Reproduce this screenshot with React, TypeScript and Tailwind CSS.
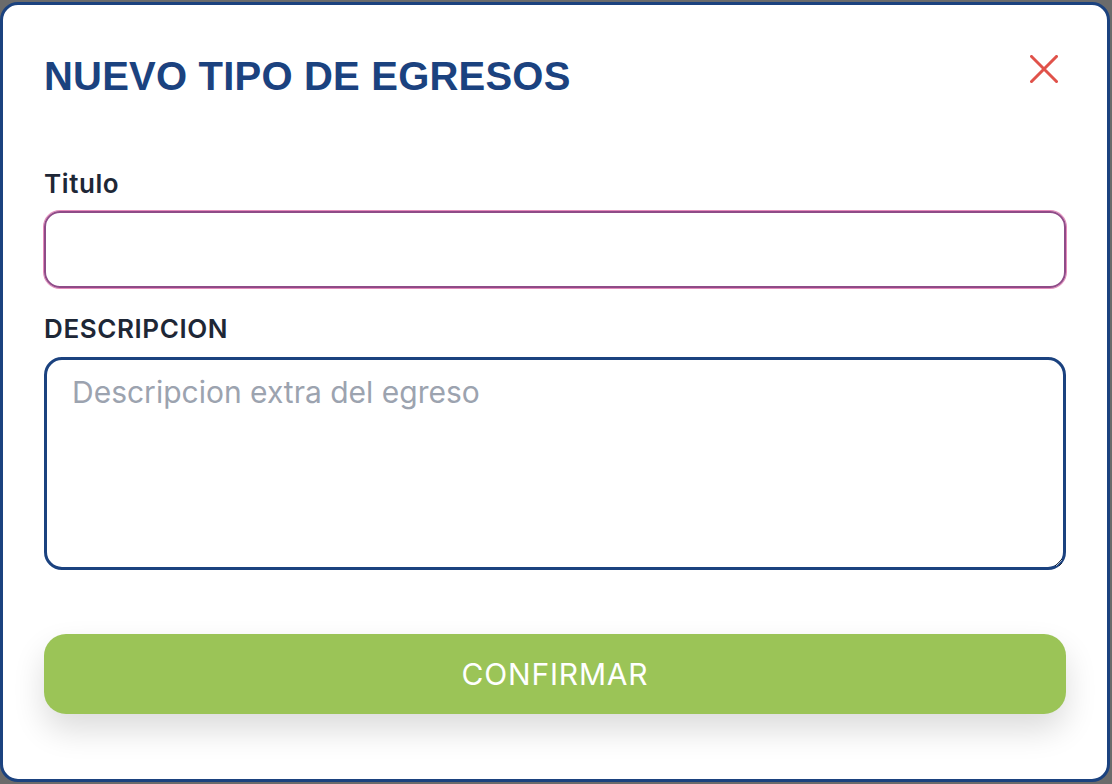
import React from 'react';

const CloseIcon: React.FC = () => (
  <svg width="28" height="28" viewBox="0 0 28 28" fill="none">
    <path d="M1.5 1.5L26.5 26.5M26.5 1.5L1.5 26.5" stroke="#e0524a" strokeWidth="3" strokeLinecap="square" />
  </svg>
);

export default function App() {
  return (
    <div className="w-[1112px] h-[784px] bg-[#6b6b6b] pt-[2px] pr-[2px] pb-[2px]">
      <div
        className="w-[1110px] h-[780px] bg-white border-[3px] border-[#1b427f] rounded-[18px] px-[41px] pt-[50px]"
        style={{ fontFamily: 'Inter, "Noto Sans", sans-serif' }}
      >
        <div className="flex items-start justify-between">
          <h1
            className="text-[40px] leading-[48px] font-bold text-[#1b427f] mt-[-3px] tracking-[0.2px]"
            style={{ fontFamily: '"Liberation Sans", Arial, sans-serif' }}
          >
            NUEVO TIPO DE EGRESOS
          </h1>
          <button className="mr-[8px] mt-0">
            <CloseIcon />
          </button>
        </div>

        <label className="block mt-[68px] text-[26px] leading-[32px] font-semibold text-[#1e2736] tracking-[0.6px]">
          Titulo
        </label>
        <input
          type="text"
          className="block w-full mt-[11px] h-[77px] rounded-[16px] border-2 border-[#8f4b88] ring-1 ring-[#e48bbb] outline-none px-[26px] text-[28px]"
        />

        <label className="block mt-[25px] text-[26px] leading-[32px] font-semibold text-[#1e2736] tracking-[0.6px]">
          DESCRIPCION
        </label>
        <textarea
          placeholder="Descripcion extra del egreso"
          className="block w-full mt-[12px] h-[213px] rounded-[18px] border-[3px] border-[#1b427f] outline-none px-[25px] py-[13px] text-[30px] leading-[38px] text-[#374151] placeholder:text-[#9ca3af]"
        />

        <button className="mt-[64px] w-full h-[80px] rounded-[22px] bg-[#9bc457] text-white text-[30px] tracking-[0.8px] shadow-[0_16px_32px_rgba(0,0,0,0.14)]">
          CONFIRMAR
        </button>
      </div>
    </div>
  );
}
